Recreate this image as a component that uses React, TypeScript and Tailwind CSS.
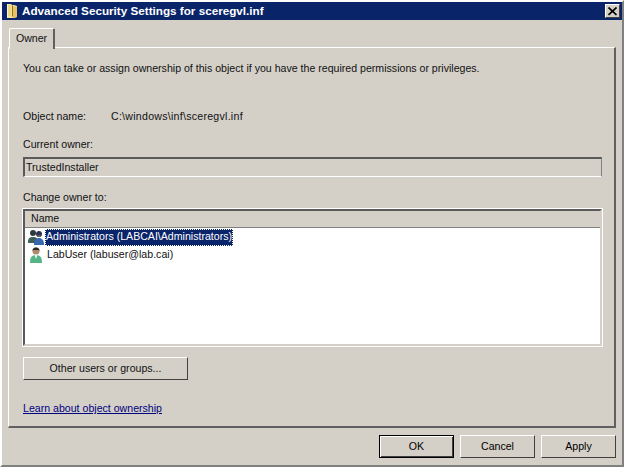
const raised = "border border-t-white border-l-white border-r-[#404040] border-b-[#404040]";

function FolderIcon() {
  return (
    <svg width="16" height="16" viewBox="0 0 16 16" className="shrink-0">
      <path d="M2 1h4l1 1h2l3 1v11l-3 1H2z" fill="#f3e29c" />
      <path d="M2 1h1v13H2z" fill="#fbf3cf" />
      <path d="M7 3l1-1v11l-1 1z" fill="#8f7430" />
      <path d="M8 3l4 1v10l-4 1z" fill="#e6c35f" />
      <path d="M3 2h3v11H3z" fill="#f0d67e" />
    </svg>
  );
}

function CloseIcon() {
  return (
    <svg width="9" height="9" viewBox="0 0 9 9">
      <path d="M0.500 0.500l8 7.500M8.500 0.500l-8 7.500" stroke="#000" strokeWidth="1.700" fill="none" />
    </svg>
  );
}

function GroupIcon() {
  return (
    <svg width="17" height="17" viewBox="0 0 17 17" className="shrink-0">
      <circle cx="5" cy="4" r="3" fill="#2f3a3c" />
      <path d="M0 13c0-4 2-5 5-5s5 1 5 5v1H0z" fill="#3f5f58" />
      <circle cx="11" cy="5" r="3" fill="#2c3350" />
      <path d="M9.500 6h3v2h-3z" fill="#6a5a55" />
      <path d="M6 16c0-5 2-7 5-7s5 2 5 7z" fill="#3868b0" />
    </svg>
  );
}

function UserIcon() {
  return (
    <svg width="17" height="17" viewBox="0 0 17 17" className="shrink-0">
      <circle cx="8" cy="4" r="3.500" fill="#b08a68" />
      <path d="M4.500 4a3.500 3.500 0 0 1 7 0l-1-1H5.500z" fill="#2a2622" />
      <path d="M2 16c0-6 2-8 6-8s6 2 6 8z" fill="#55b585" />
      <path d="M6.500 8h3l-1.500 4z" fill="#f2f7f3" />
    </svg>
  );
}

function DialogButton({ label, isDefault }: { label: string; isDefault?: boolean }) {
  return (
    <button
      className={
        isDefault
          ? "w-[75px] h-[23px] bg-[#d4d0c8] border border-black shadow-[inset_1px_1px_0_#fff,inset_-1px_-1px_0_#404040] text-black"
          : `w-[75px] h-[23px] bg-[#d4d0c8] ${raised} text-black`
      }
    >
      {label}
    </button>
  );
}

export default function App() {
  return (
    <div className="w-[624px] h-[467px] bg-[#d4d0c8] border-t-2 border-l-2 border-t-white border-l-white border-r-2 border-r-[#808080] border-b-2 border-b-[#808080] flex flex-col font-['Liberation_Sans',sans-serif] text-[10.6px] text-[#111] overflow-hidden">
      {/* Title bar */}
      <div className="h-[18px] bg-[#0a246a] flex items-center justify-between pl-[3px] pr-[2px] shrink-0">
        <div className="flex items-center gap-[1px]">
          <FolderIcon />
          <span className="text-white font-bold text-[11.7px]">Advanced Security Settings for sceregvl.inf</span>
        </div>
        <div className={`w-[15px] h-[14px] bg-[#d4d0c8] ${raised} flex items-center justify-center`}>
          <CloseIcon />
        </div>
      </div>

      {/* Tab strip and page */}
      <div className="flex-1 flex flex-col pt-[8px] pl-[6px] pr-[6px] min-h-0">
        <div className="flex h-[20px] pl-[1px] relative z-10 -mb-px">
          <div className="w-[46px] h-[21px] bg-[#d4d0c8] border-t border-l border-white border-r-2 border-r-[#606060] rounded-t-[2px] flex items-center justify-center">
            Owner
          </div>
        </div>
        <div className="h-[381px] border border-t-white border-l-white border-r-2 border-r-[#606060] border-b-2 border-b-[#606060] px-[14px] flex flex-col">
          <p className="mt-[13px] leading-[14px]">
            You can take or assign ownership of this object if you have the required permissions or privileges.
          </p>
          <div className="mt-[34px] flex leading-[14px]">
            <span className="w-[88px]">Object name:</span>
            <span className="tracking-[0.26px]">C:\windows\inf\sceregvl.inf</span>
          </div>
          <div className="mt-[14px] leading-[14px]">Current owner:</div>
          <div className="mt-[6px] h-[20px] border-2 border-t-[#5a5a5a] border-l-[#5a5a5a] border-r-[#808080] border-b-white border-r-1 border-b-1 flex items-center pl-[1px] w-[579px]">
            TrustedInstaller
          </div>
          <div className="mt-[13px] leading-[14px]">Change owner to:</div>
          <div className="mt-[5px] w-[579px] h-[137px] bg-white border-2 border-t-[#5a5a5a] border-l-[#5a5a5a] border-r-[#d4d0c8] border-b-[#d4d0c8] outline outline-white flex flex-col">
            <div className="h-[17px] bg-[#d4d0c8] border-b border-b-[#808080] pl-[6px] flex items-center shrink-0">Name</div>
            <div className="h-[18px] flex items-center pl-[3px]">
              <GroupIcon />
              <span className="bg-[#0a246a] text-white outline-1 outline-dotted outline-white -outline-offset-1 px-[1px] h-[17px] flex items-center">
                Administrators (LABCAI\Administrators)
              </span>
            </div>
            <div className="h-[18px] flex items-center pl-[3px]">
              <UserIcon />
              <span className="ml-[1px] px-[1px]">LabUser (labuser@lab.cai)</span>
            </div>
          </div>
          <button className={`mt-[11px] w-[165px] h-[23px] bg-[#d4d0c8] ${raised}`}>Other users or groups...</button>
          <a className="mt-[21px] leading-[14px] text-[#00007f] underline" href="#">
            Learn about object ownership
          </a>
        </div>
        <div className="flex justify-end gap-[6px] mt-[7px]">
          <DialogButton label="OK" isDefault />
          <DialogButton label="Cancel" />
          <DialogButton label="Apply" />
        </div>
      </div>
    </div>
  );
}
